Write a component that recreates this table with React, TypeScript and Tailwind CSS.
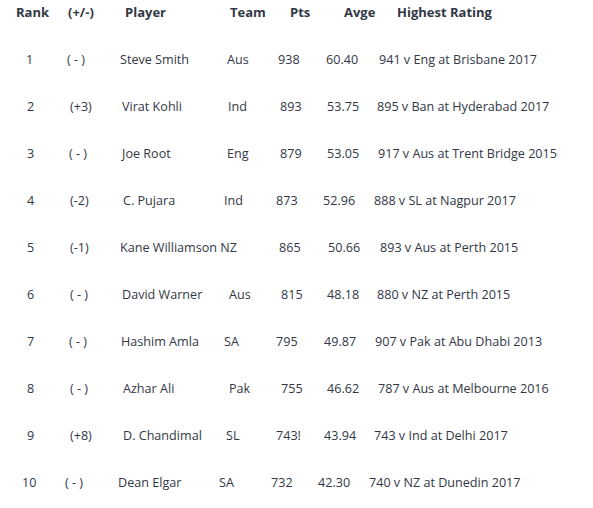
import React from "react";

const header: [string, number][] = [
  ["Rank", 16],
  ["(+/-)", 68],
  ["Player", 125],
  ["Team", 230],
  ["Pts", 290],
  ["Avge", 344],
  ["Highest Rating", 397],
];

const rows: [string, number][][] = [
  [["1", 26], ["( - )", 67], ["Steve Smith", 120], ["Aus", 227], ["938", 278], ["60.40", 326], ["941 v Eng at Brisbane 2017", 379]],
  [["2", 27], ["(+3)", 70], ["Virat Kohli", 122], ["Ind", 228], ["893", 280], ["53.75", 327], ["895 v Ban at Hyderabad 2017", 377]],
  [["3", 27], ["( - )", 69], ["Joe Root", 122], ["Eng", 227], ["879", 280], ["53.05", 327], ["917 v Aus at Trent Bridge 2015", 378]],
  [["4", 27], ["(-2)", 70], ["C. Pujara", 123], ["Ind", 224], ["873", 276], ["52.96", 323], ["888 v SL at Nagpur 2017", 374]],
  [["5", 27], ["(-1)", 70], ["Kane Williamson NZ", 120], ["865", 279], ["50.66", 328], ["893 v Aus at Perth 2015", 380]],
  [["6", 27], ["( - )", 70], ["David Warner", 122], ["Aus", 229], ["815", 281], ["48.18", 327], ["880 v NZ at Perth 2015", 377]],
  [["7", 27], ["( - )", 69], ["Hashim Amla", 121], ["SA", 224], ["795", 276], ["49.87", 324], ["907 v Pak at Abu Dhabi 2013", 375]],
  [["8", 27], ["( - )", 70], ["Azhar Ali", 123], ["Pak", 229], ["755", 281], ["46.62", 327], ["787 v Aus at Melbourne 2016", 378]],
  [["9", 27], ["(+8)", 70], ["D. Chandimal", 123], ["SL", 226], ["743!", 276], ["43.94", 324], ["743 v Ind at Delhi 2017", 374]],
  [["10", 22], ["( - )", 65], ["Dean Elgar", 118], ["SA", 219], ["732", 271], ["42.30", 318], ["740 v NZ at Dunedin 2017", 369]],
];

function Line({ cells, bold, h }: { cells: [string, number][]; bold?: boolean; h: string }) {
  return (
    <div className={`flex items-center ${h} whitespace-nowrap`}>
      {cells.map(([t, x], i) => {
        const next = i + 1 < cells.length ? cells[i + 1][1] : 593;
        const start = i === 0 ? 0 : x;
        const w = next - start;
        return (
          <div
            key={i}
            style={{ width: w, paddingLeft: i === 0 ? x : 0 }}
            className={bold ? "font-bold text-[13px]" : "text-[12.6px]"}
          >
            {t}
          </div>
        );
      })}
    </div>
  );
}

export default function App() {
  return (
    <div
      className="w-[593px] h-[508px] bg-white text-[#323746] overflow-hidden"
      style={{ fontFamily: '"Open Sans", "Noto Sans", sans-serif' }}
    >
      <Line cells={header} bold h="h-[26px]" />
      <div className="mt-[11px]">
        {rows.map((r, i) => (
          <Line key={i} cells={r} h="h-[47px]" />
        ))}
      </div>
    </div>
  );
}
